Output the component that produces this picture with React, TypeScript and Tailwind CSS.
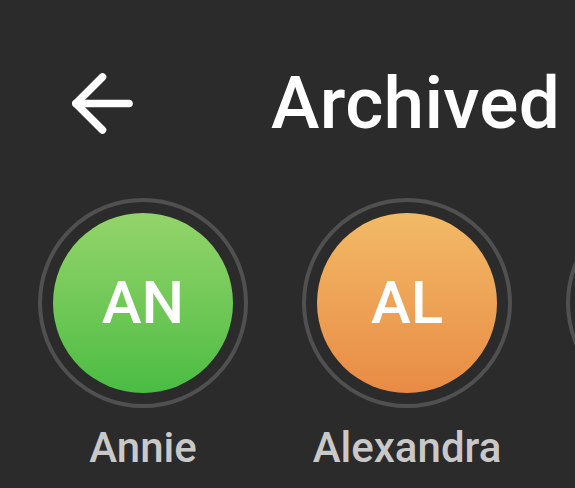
import React from 'react';
import { ArrowLeft } from 'lucide-react';

interface Contacto {
  iniciales: string;
  nombre: string;
  fondo: string;
}

const contactos: Contacto[] = [
  { iniciales: 'AN', nombre: 'Annie', fondo: 'bg-gradient-to-b from-[#93d46b] to-[#49bd43]' },
  { iniciales: 'AL', nombre: 'Alexandra', fondo: 'bg-gradient-to-b from-[#f2ba66] to-[#e88b44]' },
];

export default function App() {
  return (
    <div
      className="w-[575px] h-[488px] overflow-hidden bg-[#2b2b2b] text-white"
      style={{ fontFamily: 'Roboto, "Noto Sans", sans-serif' }}
    >
      {/* cabecera */}
      <div className="flex items-center pt-[58px] pl-[57px]">
        <ArrowLeft size={91} strokeWidth={2} className="text-white shrink-0" />
        <h1 className="ml-[123px] text-[73px] leading-none font-medium tracking-[0.3px] whitespace-nowrap">
          Archived
        </h1>
      </div>

      {/* contactos archivados */}
      <div className="flex gap-[54px] pl-[38px] mt-[49px]">
        {contactos.map((c) => (
          <div key={c.nombre} className="flex flex-col items-center w-[210px] shrink-0">
            <div className="w-[210px] h-[210px] rounded-full border-4 border-[#505050] flex items-center justify-center">
              <div
                className={`w-[180px] h-[180px] rounded-full flex items-center justify-center ${c.fondo}`}
              >
                <span className="text-[60px] leading-none font-medium text-white">{c.iniciales}</span>
              </div>
            </div>
            <span className="mt-[19px] text-[42px] leading-none font-medium text-[#c9c9c9] whitespace-nowrap">
              {c.nombre}
            </span>
          </div>
        ))}

        {/* siguiente contacto, cortado por el borde */}
        <div className="w-[210px] shrink-0">
          <div className="w-[210px] h-[210px] rounded-full border-4 border-[#505050]" />
        </div>
      </div>
    </div>
  );
}
